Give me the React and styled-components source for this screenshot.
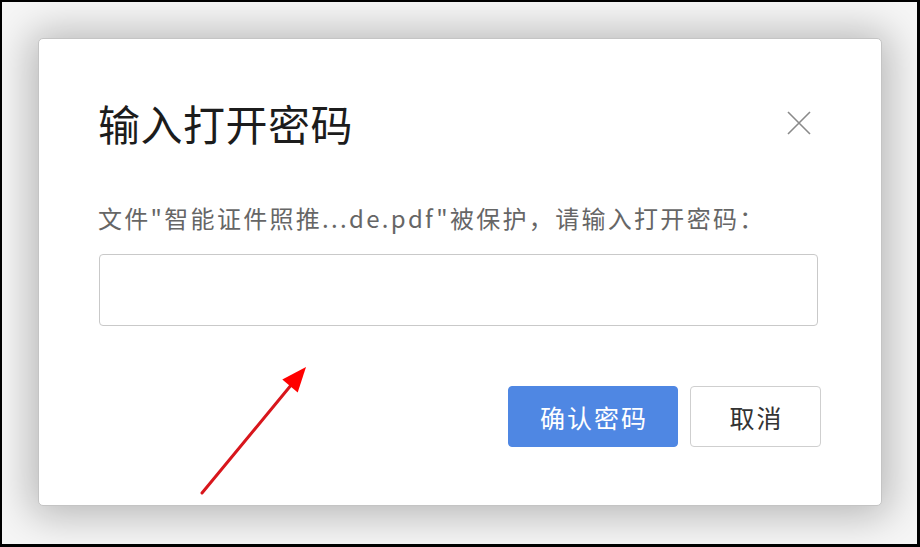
import React from "react";
import styled, { createGlobalStyle } from "styled-components";

const Global = createGlobalStyle`
  html, body { margin: 0; padding: 0; background: #000; }
  * { box-sizing: border-box; }
`;

const Frame = styled.div`
  position: relative;
  width: 920px;
  height: 547px;
  border-style: solid;
  border-color: #000;
  border-width: 2px 3px 3px 2px;
  background: #f6f6f6;
  padding: 36px 0 0 36px;
  font-family: "Noto Sans CJK SC", "Noto Sans", sans-serif;
  overflow: hidden;
`;

const Dialog = styled.div`
  width: 844px;
  height: 468px;
  background: #fff;
  border: 1px solid #c4c4c4;
  border-radius: 5px;
  box-shadow: 0 2px 40px 8px rgba(0, 0, 0, 0.26);
  padding: 59px 60px 0 60px;
  display: flex;
  flex-direction: column;
`;

const Header = styled.div`
  display: flex;
  align-items: center;
  justify-content: space-between;
  height: 50px;
`;

const Title = styled.h1`
  margin: 0 0 0 -1px;
  font-size: 42px;
  line-height: 50px;
  font-weight: 400;
  letter-spacing: 0.5px;
  color: #1c1c1c;
`;

const CloseButton = styled.button`
  border: 0;
  background: none;
  padding: 0;
  margin-right: 10px;
  width: 24px;
  height: 24px;
  display: flex;
  cursor: pointer;
`;

const Message = styled.p`
  margin: 52px 0 0 -1px;
  font-size: 24px;
  line-height: 36px;
  letter-spacing: 2.3px;
  color: #666;
`;

const PasswordInput = styled.input`
  margin-top: 18px;
  width: 719px;
  height: 72px;
  border: 1px solid #c9c9c9;
  border-radius: 4px;
  outline: none;
  padding: 0 14px;
  font-size: 24px;
  background: #fff;
`;

const Actions = styled.div`
  margin-top: 60px;
  display: flex;
  justify-content: flex-end;
  gap: 12px;
`;

const Button = styled.button`
  height: 61px;
  width: ${(p) => p.$w}px;
  border-radius: 4px;
  font-family: inherit;
  font-size: 25px;
  letter-spacing: 2px;
  padding: 0 0 0 2px;
  cursor: pointer;
  border: 1px solid ${(p) => (p.$primary ? "#4f87e3" : "#cfcfcf")};
  background: ${(p) => (p.$primary ? "#4f87e3" : "#fff")};
  color: ${(p) => (p.$primary ? "#fff" : "#333")};
`;

const Arrow = styled.svg`
  position: absolute;
  left: -2px;
  top: -2px;
  pointer-events: none;
`;

export default function App() {
  return (
    <>
      <Global />
      <Frame>
        <Dialog>
          <Header>
            <Title>输入打开密码</Title>
            <CloseButton aria-label="关闭">
              <svg width="24" height="24" viewBox="0 0 24 24">
                <path d="M1 1L23 23M23 1L1 23" stroke="#8a8a8a" strokeWidth="1.6" />
              </svg>
            </CloseButton>
          </Header>
          <Message>文件"智能证件照推...de.pdf"被保护，请输入打开密码：</Message>
          <PasswordInput type="password" />
          <Actions>
            <Button $primary $w={170}>确认密码</Button>
            <Button $w={131}>取消</Button>
          </Actions>
        </Dialog>
        <Arrow width="920" height="547" viewBox="0 0 920 547">
          <line x1="202" y1="493" x2="292" y2="384" stroke="#d8161c" strokeWidth="3" strokeLinecap="round" />
          <polygon points="306,367 297.7,392.4 282.3,379.6" fill="#f00" />
        </Arrow>
      </Frame>
    </>
  );
}
